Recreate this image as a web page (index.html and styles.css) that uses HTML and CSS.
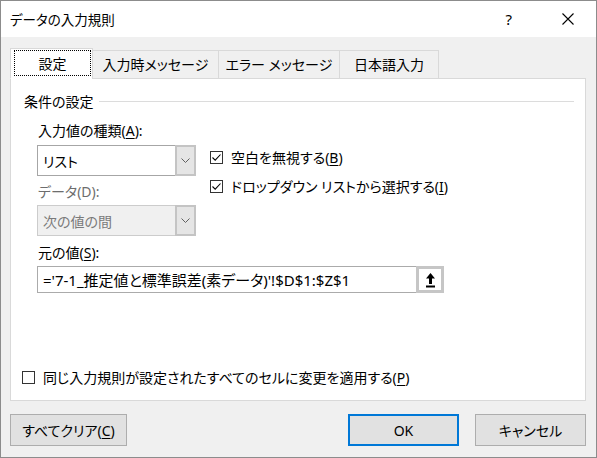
FILE: index.html
```html
<!DOCTYPE html>
<html lang="ja">
<head>
<meta charset="utf-8">
<title>データの入力規則</title>
<link rel="stylesheet" href="styles.css">
</head>
<body>
<div class="dialog">
  <div class="titlebar">
    <span class="title">データの入力規則</span>
    <span class="help">?</span>
    <svg class="close" width="12" height="12" viewBox="0 0 12 12"><path d="M0.5 0.5L11.5 11.5M11.5 0.5L0.5 11.5" stroke="#000" stroke-width="1.1" fill="none"/></svg>
  </div>

  <div class="client">
    <div class="tabs">
      <div class="tab active"><span class="focus">設定</span></div>
      <div class="tab tab-msg">入力時メッセージ</div>
      <div class="tab tab-err">エラー メッセージ</div>
      <div class="tab tab-ime">日本語入力</div>
    </div>

    <div class="panel">
      <div class="group-head"><span>条件の設定</span><i class="rule"></i></div>

      <div class="group-body">
        <div class="upper">
          <div class="left">
            <div class="lbl first">入力値の種類(<u>A</u>):</div>
            <div class="combo">
              <span class="value">リスト</span>
              <span class="drop"><svg width="9" height="5" viewBox="0 0 9 5"><path d="M0.5 0.5L4.5 4.5L8.5 0.5" stroke="#606060" fill="none"/></svg></span>
            </div>
            <div class="lbl second off">データ(D):</div>
            <div class="combo off">
              <span class="value">次の値の間</span>
              <span class="drop"><svg width="9" height="5" viewBox="0 0 9 5"><path d="M0.5 0.5L4.5 4.5L8.5 0.5" stroke="#606060" fill="none"/></svg></span>
            </div>
          </div>
          <div class="right">
            <div class="check">
              <span class="box"><svg width="11" height="11" viewBox="0 0 11 11"><path d="M1.5 5.5L4.2 8.2L9.5 2.5" stroke="#000" stroke-width="1.1" fill="none"/></svg></span>
              空白を無視する(<u>B</u>)
            </div>
            <div class="check">
              <span class="box"><svg width="11" height="11" viewBox="0 0 11 11"><path d="M1.5 5.5L4.2 8.2L9.5 2.5" stroke="#000" stroke-width="1.1" fill="none"/></svg></span>
              ドロップダウン リストから選択する(<u>I</u>)
            </div>
          </div>
        </div>

        <div class="lbl third">元の値(<u>S</u>):</div>
        <div class="source">
          <span class="text">='7-1_推定値と標準誤差(素データ)'!$D$1:$Z$1</span>
          <span class="refbtn">
            <svg width="11" height="16" viewBox="0 0 11 16"><path d="M5.5 1L10 6.5H7V12H4V6.5H1Z" fill="#000"/><rect x="1" y="13.5" width="9" height="2" fill="#000"/></svg>
          </span>
        </div>
      </div>

      <div class="check apply">
        <span class="box"></span>
        同じ入力規則が設定されたすべてのセルに変更を適用する(<u>P</u>)
      </div>
    </div>

    <div class="buttons">
      <button class="btn clear">すべてクリア(<u>C</u>)</button>
      <span class="spacer"></span>
      <button class="btn ok">OK</button>
      <button class="btn cancel">キャンセル</button>
    </div>
  </div>
</div>
</body>
</html>
```

FILE: styles.css
```css
html, body {
    margin: 0;
    padding: 0;
    background: #fff;
}

body {
    font-family: "Noto Sans", "Noto Sans CJK JP", sans-serif;
    font-size: 14px;
    font-feature-settings: "palt";
    color: #000;
}

u {
    text-decoration: underline;
    text-underline-offset: 2px;
}

.dialog {
    box-sizing: border-box;
    width: 597px;
    height: 458px;
    border: 1px solid #8c8c8c;
    background: #f0f0f0;
    display: flex;
    flex-direction: column;
    overflow: hidden;
}

/* title bar */
.titlebar {
    height: 36px;
    background: #fff;
    display: flex;
    align-items: center;
    flex-shrink: 0;
}

.title {
    padding-left: 9px;
    font-size: 13.5px;
    flex: 1;
}

.help {
    font-size: 15px;
    margin-right: 50px;
}

.close {
    margin-right: 22px;
}

/* body of the dialog */
.client {
    flex: 1;
    padding: 11px 10px 0 9px;
}

.tabs {
    display: flex;
    align-items: flex-end;
    height: 31px;
    margin-bottom: -1px;
    position: relative;
    z-index: 1;
}

.tab {
    box-sizing: border-box;
    height: 29px;
    border: 1px solid #d9d9d9;
    background: #f0f0f0;
    margin-left: -1px;
    display: flex;
    align-items: center;
    justify-content: center;
    padding-bottom: 1px;
}

.tab.active {
    height: 31px;
    width: 83px;
    margin-left: 0;
    background: #fff;
    border-bottom-color: #fff;
    padding: 1px 1px 2px 3px;
    align-items: stretch;
}

.focus {
    flex: 1;
    border: 1px dotted #000;
    display: flex;
    align-items: center;
    justify-content: center;
}

.tab-msg { width: 127px; }
.tab-err { width: 122px; }
.tab-ime { width: 100px; }

.panel {
    box-sizing: border-box;
    height: 323px;
    background: #fff;
    border: 1px solid #d9d9d9;
    display: flex;
    flex-direction: column;
    padding-bottom: 13px;
}

.group-head {
    margin-top: 12px;
    padding-left: 13px;
    height: 20px;
    display: flex;
    align-items: center;
}

.rule {
    flex: 1;
    height: 1px;
    background: #dcdcdc;
    margin: 1px 11px 0 5px;
}

.group-body {
    padding-left: 26px;
}

.upper {
    display: flex;
}

.left {
    width: 159px;
}

.lbl {
    height: 20px;
    line-height: 20px;
    padding-left: 1px;
}

.lbl.first { margin-top: 10px; }
.lbl.second { margin-top: 6px; }
.lbl.third { margin-top: 7px; }

.off {
    color: #6d6d6d;
}

.combo {
    box-sizing: border-box;
    height: 31px;
    margin-top: 4px;
    border: 1px solid #a6a6a6;
    display: flex;
    background: #fff;
}

.combo.off {
    margin-top: 3px;
    background: #f0f0f0;
    border-color: #cccccc;
    color: #7a7a7a;
}

.value {
    flex: 1;
    padding-left: 5px;
    display: flex;
    align-items: center;
}

.drop {
    box-sizing: border-box;
    width: 21px;
    background: #e5e5e5;
    border: 2px solid #c4c4c4;
    margin: -1px -1px -1px 0;
    display: flex;
    align-items: center;
    justify-content: center;
}

.right {
    margin-left: 14px;
    padding-top: 36px;
}

.check {
    height: 20px;
    display: flex;
    align-items: center;
    white-space: nowrap;
}

.right .check + .check {
    margin-top: 9px;
}

.box {
    box-sizing: border-box;
    width: 13px;
    height: 13px;
    border: 1px solid #333;
    background: #fff;
    margin-right: 8px;
    display: flex;
    align-items: center;
    justify-content: center;
}

.source {
    box-sizing: border-box;
    width: 407px;
    height: 27px;
    margin-top: 3px;
    border: 1px solid #ababab;
    display: flex;
    align-items: stretch;
}

.source .text {
    flex: 1;
    padding-left: 5px;
    font-size: 15px;
    display: flex;
    align-items: center;
    white-space: nowrap;
}

.refbtn {
    box-sizing: border-box;
    width: 28px;
    margin: -1px -1px -1px 0;
    border: 3px solid #c6c6c6;
    background: #fff;
    display: flex;
    align-items: center;
    justify-content: center;
}

.apply {
    margin-top: auto;
    padding-left: 11px;
}

/* command buttons */
.buttons {
    display: flex;
    margin-top: 13px;
}

.spacer {
    flex: 1;
}

.btn {
    box-sizing: border-box;
    height: 32px;
    font: inherit;
    font-feature-settings: "palt";
    color: #000;
    background: #e1e1e1;
    border: 1px solid #adadad;
    padding: 0;
}

.btn.clear { width: 117px; }
.btn.ok {
    width: 111px;
    border: 2px solid #0078d7;
    margin-right: 16px;
}
.btn.cancel { width: 111px; }
```
